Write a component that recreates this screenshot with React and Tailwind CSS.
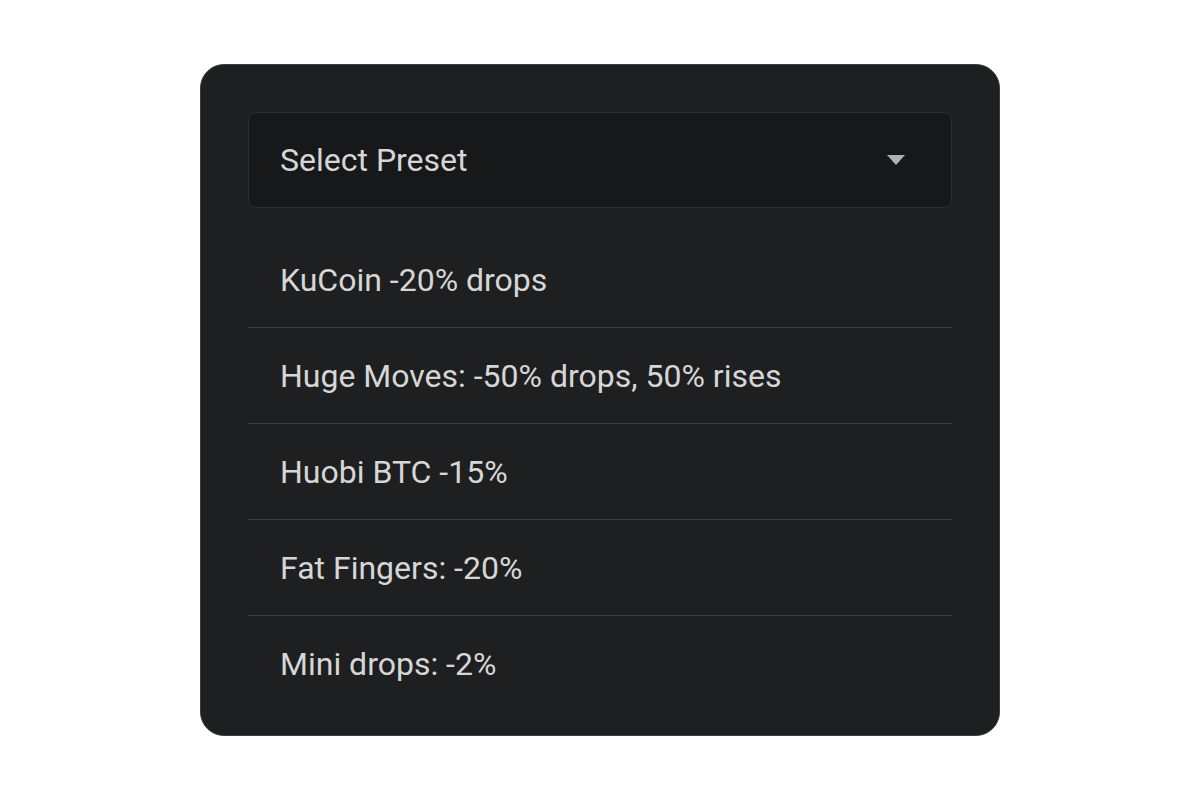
import React from "react";

const presets = [
  "KuCoin -20% drops",
  "Huge Moves: -50% drops, 50% rises",
  "Huobi BTC -15%",
  "Fat Fingers: -20%",
  "Mini drops: -2%",
];

const App = () => {
  return (
    <div
      className="w-[1200px] h-[800px] bg-white flex items-start justify-center pt-[64px]"
      style={{ fontFamily: "Roboto, 'Liberation Sans', sans-serif" }}
    >
      <div className="w-[800px] h-[672px] bg-[#1e1f21] border border-[#3a3c3f] rounded-[24px] px-[47px] pt-[47px]">
        <div className="h-[96px] bg-[#17181a] border border-[#2c2d30] rounded-[8px] flex items-center justify-between pl-[31px] pr-[45px]">
          <span className="text-[32px] text-[#d6d6d6]">Select Preset</span>
          <svg width="20" height="11" viewBox="0 0 20 11">
            <path d="M1 0 L19 0 L10 10 Z" fill="#b0b0b0" />
          </svg>
        </div>
        <div className="mt-[24px]">
          {presets.map((p, i) => (
            <div
              key={p}
              className={`h-[96px] flex items-center pl-[32px] ${
                i < presets.length - 1 ? "border-b border-[#3a3c3f]" : ""
              }`}
            >
              <span className="text-[32px] text-[#d6d6d6]">{p}</span>
            </div>
          ))}
        </div>
      </div>
    </div>
  );
};

export default App;
